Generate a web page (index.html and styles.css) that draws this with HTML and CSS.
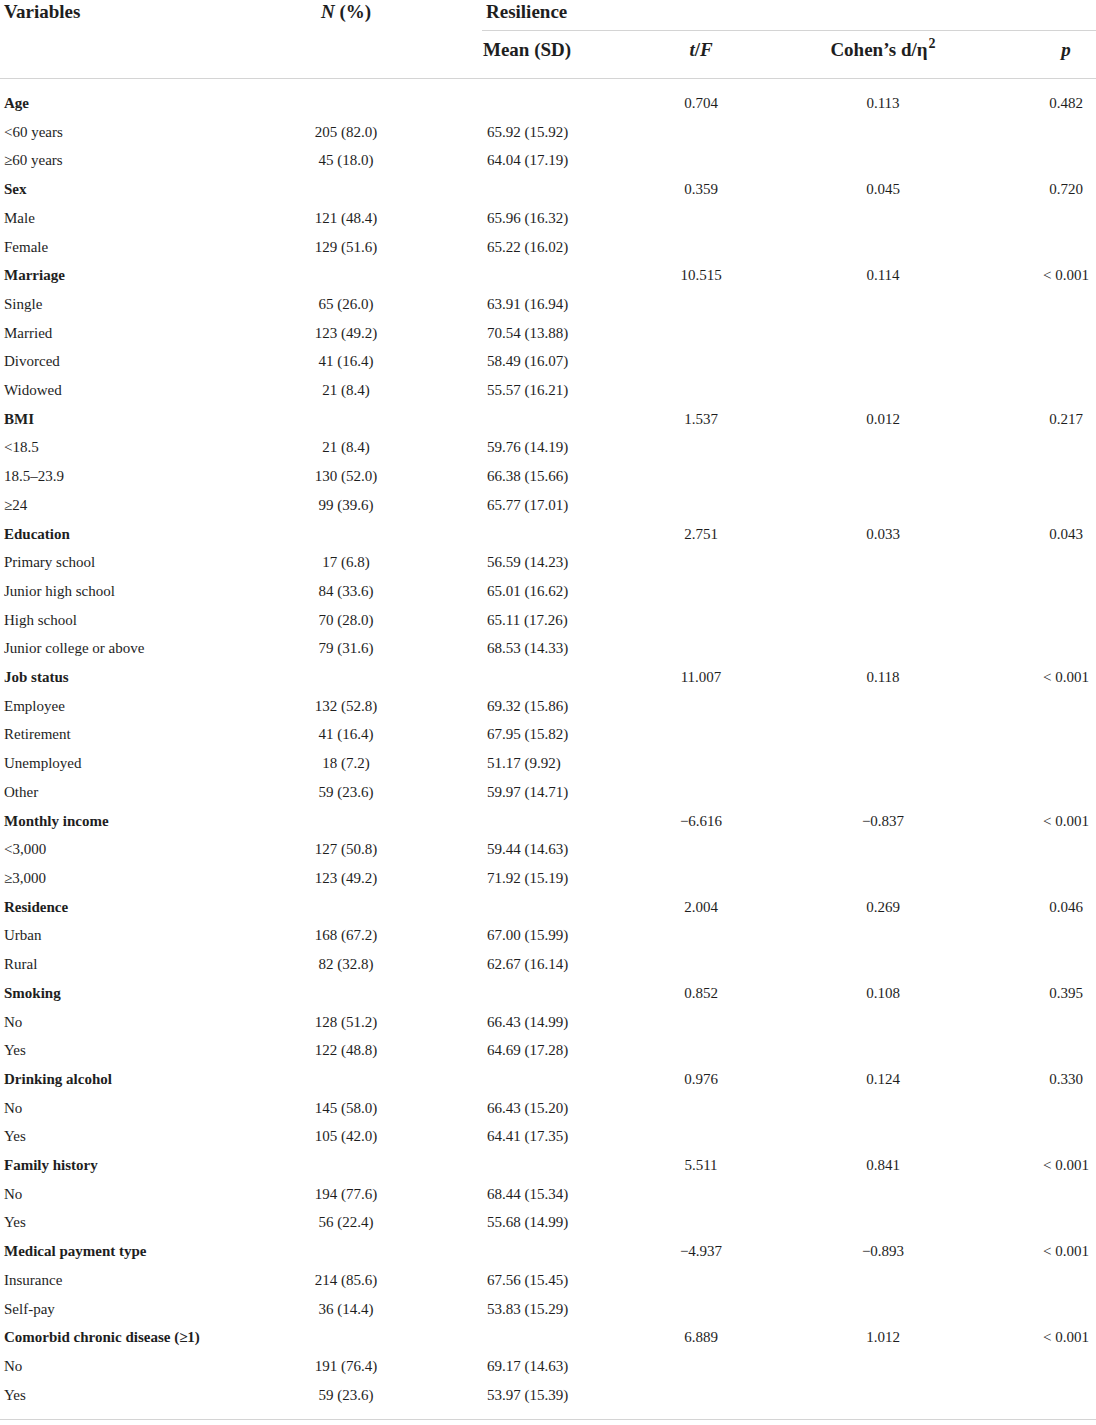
FILE: index.html
```html
<!DOCTYPE html>
<html lang="en">
<head>
    <meta charset="UTF-8">
    <meta name="viewport" content="width=device-width, initial-scale=1.0">
    <title>Resilience by participant characteristics</title>
    <link rel="stylesheet" href="styles.css">
</head>
<body>
    <table class="stats">
        <colgroup>
            <col class="c-var">
            <col class="c-n">
            <col class="c-mean">
            <col class="c-t">
            <col class="c-d">
            <col class="c-p">
        </colgroup>
        <thead>
            <tr class="head-top">
                <th class="var" rowspan="2">Variables</th>
                <th class="num" rowspan="2"><em>N</em> (%)</th>
                <th class="group" colspan="4">Resilience</th>
            </tr>
            <tr class="head-sub">
                <th class="mean">Mean (SD)</th>
                <th class="num"><em>t</em>/<em>F</em></th>
                <th class="num">Cohen’s d/η<sup>2</sup></th>
                <th class="num"><em>p</em></th>
            </tr>
        </thead>
        <tbody>
            <tr class="cat"><td>Age</td><td></td><td></td><td>0.704</td><td>0.113</td><td>0.482</td></tr>
            <tr><td>&lt;60 years</td><td>205 (82.0)</td><td>65.92 (15.92)</td><td></td><td></td><td></td></tr>
            <tr><td>≥60 years</td><td>45 (18.0)</td><td>64.04 (17.19)</td><td></td><td></td><td></td></tr>

            <tr class="cat"><td>Sex</td><td></td><td></td><td>0.359</td><td>0.045</td><td>0.720</td></tr>
            <tr><td>Male</td><td>121 (48.4)</td><td>65.96 (16.32)</td><td></td><td></td><td></td></tr>
            <tr><td>Female</td><td>129 (51.6)</td><td>65.22 (16.02)</td><td></td><td></td><td></td></tr>

            <tr class="cat"><td>Marriage</td><td></td><td></td><td>10.515</td><td>0.114</td><td>&lt; 0.001</td></tr>
            <tr><td>Single</td><td>65 (26.0)</td><td>63.91 (16.94)</td><td></td><td></td><td></td></tr>
            <tr><td>Married</td><td>123 (49.2)</td><td>70.54 (13.88)</td><td></td><td></td><td></td></tr>
            <tr><td>Divorced</td><td>41 (16.4)</td><td>58.49 (16.07)</td><td></td><td></td><td></td></tr>
            <tr><td>Widowed</td><td>21 (8.4)</td><td>55.57 (16.21)</td><td></td><td></td><td></td></tr>

            <tr class="cat"><td>BMI</td><td></td><td></td><td>1.537</td><td>0.012</td><td>0.217</td></tr>
            <tr><td>&lt;18.5</td><td>21 (8.4)</td><td>59.76 (14.19)</td><td></td><td></td><td></td></tr>
            <tr><td>18.5–23.9</td><td>130 (52.0)</td><td>66.38 (15.66)</td><td></td><td></td><td></td></tr>
            <tr><td>≥24</td><td>99 (39.6)</td><td>65.77 (17.01)</td><td></td><td></td><td></td></tr>

            <tr class="cat"><td>Education</td><td></td><td></td><td>2.751</td><td>0.033</td><td>0.043</td></tr>
            <tr><td>Primary school</td><td>17 (6.8)</td><td>56.59 (14.23)</td><td></td><td></td><td></td></tr>
            <tr><td>Junior high school</td><td>84 (33.6)</td><td>65.01 (16.62)</td><td></td><td></td><td></td></tr>
            <tr><td>High school</td><td>70 (28.0)</td><td>65.11 (17.26)</td><td></td><td></td><td></td></tr>
            <tr><td>Junior college or above</td><td>79 (31.6)</td><td>68.53 (14.33)</td><td></td><td></td><td></td></tr>

            <tr class="cat"><td>Job status</td><td></td><td></td><td>11.007</td><td>0.118</td><td>&lt; 0.001</td></tr>
            <tr><td>Employee</td><td>132 (52.8)</td><td>69.32 (15.86)</td><td></td><td></td><td></td></tr>
            <tr><td>Retirement</td><td>41 (16.4)</td><td>67.95 (15.82)</td><td></td><td></td><td></td></tr>
            <tr><td>Unemployed</td><td>18 (7.2)</td><td>51.17 (9.92)</td><td></td><td></td><td></td></tr>
            <tr><td>Other</td><td>59 (23.6)</td><td>59.97 (14.71)</td><td></td><td></td><td></td></tr>

            <tr class="cat"><td>Monthly income</td><td></td><td></td><td>−6.616</td><td>−0.837</td><td>&lt; 0.001</td></tr>
            <tr><td>&lt;3,000</td><td>127 (50.8)</td><td>59.44 (14.63)</td><td></td><td></td><td></td></tr>
            <tr><td>≥3,000</td><td>123 (49.2)</td><td>71.92 (15.19)</td><td></td><td></td><td></td></tr>

            <tr class="cat"><td>Residence</td><td></td><td></td><td>2.004</td><td>0.269</td><td>0.046</td></tr>
            <tr><td>Urban</td><td>168 (67.2)</td><td>67.00 (15.99)</td><td></td><td></td><td></td></tr>
            <tr><td>Rural</td><td>82 (32.8)</td><td>62.67 (16.14)</td><td></td><td></td><td></td></tr>

            <tr class="cat"><td>Smoking</td><td></td><td></td><td>0.852</td><td>0.108</td><td>0.395</td></tr>
            <tr><td>No</td><td>128 (51.2)</td><td>66.43 (14.99)</td><td></td><td></td><td></td></tr>
            <tr><td>Yes</td><td>122 (48.8)</td><td>64.69 (17.28)</td><td></td><td></td><td></td></tr>

            <tr class="cat"><td>Drinking alcohol</td><td></td><td></td><td>0.976</td><td>0.124</td><td>0.330</td></tr>
            <tr><td>No</td><td>145 (58.0)</td><td>66.43 (15.20)</td><td></td><td></td><td></td></tr>
            <tr><td>Yes</td><td>105 (42.0)</td><td>64.41 (17.35)</td><td></td><td></td><td></td></tr>

            <tr class="cat"><td>Family history</td><td></td><td></td><td>5.511</td><td>0.841</td><td>&lt; 0.001</td></tr>
            <tr><td>No</td><td>194 (77.6)</td><td>68.44 (15.34)</td><td></td><td></td><td></td></tr>
            <tr><td>Yes</td><td>56 (22.4)</td><td>55.68 (14.99)</td><td></td><td></td><td></td></tr>

            <tr class="cat"><td>Medical payment type</td><td></td><td></td><td>−4.937</td><td>−0.893</td><td>&lt; 0.001</td></tr>
            <tr><td>Insurance</td><td>214 (85.6)</td><td>67.56 (15.45)</td><td></td><td></td><td></td></tr>
            <tr><td>Self-pay</td><td>36 (14.4)</td><td>53.83 (15.29)</td><td></td><td></td><td></td></tr>

            <tr class="cat"><td>Comorbid chronic disease (≥1)</td><td></td><td></td><td>6.889</td><td>1.012</td><td>&lt; 0.001</td></tr>
            <tr><td>No</td><td>191 (76.4)</td><td>69.17 (14.63)</td><td></td><td></td><td></td></tr>
            <tr><td>Yes</td><td>59 (23.6)</td><td>53.97 (15.39)</td><td></td><td></td><td></td></tr>
        </tbody>
    </table>
</body>
</html>
```

FILE: styles.css
```css
body {
    margin: 0;
    background: #fff;
    color: #1e1e1e;
    font-family: "Liberation Serif", "Times New Roman", serif;
}

.stats {
    width: 1096px;
    table-layout: fixed;
    border-collapse: separate;
    border-spacing: 0;
    font-size: 15px;
}

.c-var { width: 210px; }
.c-n { width: 272px; }
.c-mean { width: 190px; }
.c-t { width: 58px; }
.c-d { width: 306px; }
.c-p { width: 60px; }

/* header */
thead th {
    font-size: 19px;
    font-weight: bold;
    line-height: 24px;
    padding: 0;
    vertical-align: top;
    white-space: nowrap;
}
thead em {
    font-style: italic;
}
thead sup {
    font-size: 14px;
    line-height: 0;
    vertical-align: 8px;
    margin-left: 1px;
}
.head-top th {
    padding-bottom: 6px;
}
.head-top .var {
    text-align: left;
    padding-left: 4px;
    border-bottom: 1px solid #d4d4d4;
}
.head-top .num {
    text-align: center;
    border-bottom: 1px solid #d4d4d4;
}
.head-top .group {
    text-align: left;
    padding-left: 4px;
    border-bottom: 1px solid #d4d4d4;
}
.head-sub th {
    padding-top: 7px;
    padding-bottom: 16px;
    border-bottom: 1px solid #d4d4d4;
}
.head-sub .mean {
    text-align: left;
    padding-left: 1px;
}
.head-sub .num {
    text-align: center;
}

/* body */
tbody td {
    padding: 0;
    line-height: 28.7px;
    text-align: center;
    white-space: nowrap;
}
tbody td:first-child {
    text-align: left;
    padding-left: 4px;
}
tbody td:nth-child(3) {
    text-align: left;
    padding-left: 5px;
}
tbody tr:first-child td {
    padding-top: 10px;
}
tbody tr:last-child td {
    padding-bottom: 10px;
    border-bottom: 1px solid #d4d4d4;
}
.cat td:first-child {
    font-weight: bold;
}
```
